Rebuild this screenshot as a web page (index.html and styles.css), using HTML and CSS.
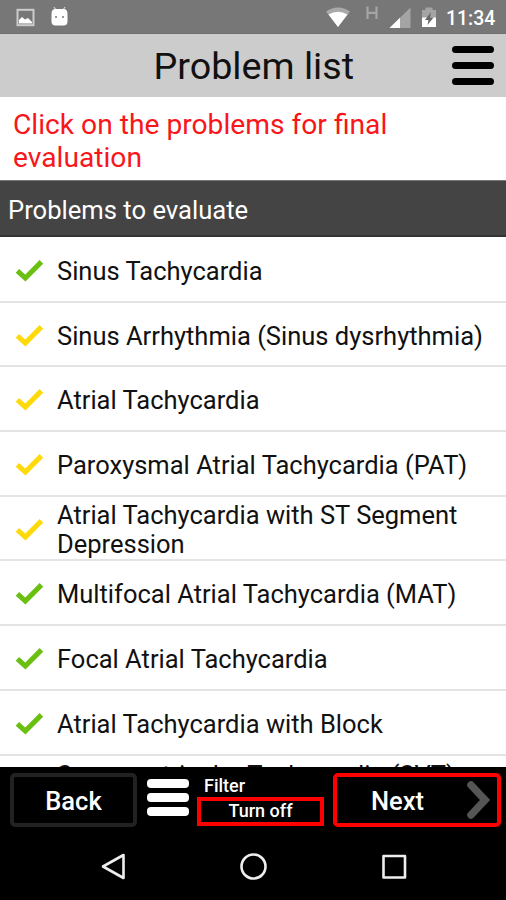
FILE: index.html
```html
<!DOCTYPE html>
<html lang="en">
<head>
<meta charset="utf-8">
<title>Problem list</title>
<link rel="stylesheet" href="styles.css">
</head>
<body>
<svg width="0" height="0" class="defs"><symbol id="check" viewBox="0 0 28 22"><path d="M2.300 11.300 10 18.300 25.500 2.700" fill="none" stroke="currentColor" stroke-width="4.900"/></symbol></svg>
<div class="screen">
  <div class="status">
    <svg class="status-left" viewBox="0 0 80 34">
      <rect x="17.5" y="9.8" width="16" height="15.4" fill="none" stroke="#ccc" stroke-width="2"/>
      <path d="M19 23.5V20l3-3 3 2.500 3-1.500 4 4v1.500z" fill="#fff"/>
      <path d="M54 7l2 3M65 7l-2 3" stroke="#ccc" stroke-width="1.300"/>
      <path d="M51.500 14q0-5 4-5h8q4 0 4 5v7.500q0 4-4 4h-8q-4 0-4-4z" fill="#fff"/>
      <circle cx="56" cy="17" r="1" fill="#777"/><circle cx="63" cy="17" r="1" fill="#777"/>
    </svg>
    <svg class="status-right" viewBox="320 0 120 34">
      <path d="M326 11.500Q338 3.500 350 11.500L338 27z" fill="#a9a9a9"/>
      <path d="M328.500 14.500Q338 9 347.500 14.500L338 27z" fill="#fff"/>
      <path d="M367.500 6.500V19M376.500 6.500V19M367.500 12.800H376.500" stroke="#a4a4a4" stroke-width="2.200"/>
      <path d="M389.500 28 410.500 7.500V28z" fill="#a4a4a4"/><path d="M389.500 28 400 17.800V28z" fill="#fff"/>
      <path d="M422 10h3.500V7.500h7V10h3.500v17h-14z" fill="#a4a4a4"/><path d="M422 17.500h14V27h-14z" fill="#fff"/>
      <path d="M431 12l-6 8h3.500l-1 5 6-7.500h-3.500z" fill="#666"/>
    </svg>
    <span class="clock">11:34</span>
  </div>
  <header class="header">
    <h1 class="title">Problem list</h1>
    <div class="menu"><i></i><i></i><i></i></div>
  </header>
  <p class="prompt">Click on the problems for final<br>evaluation</p>
  <h2 class="section">Problems to evaluate</h2>
  <ul class="list">
    <li class="row"><svg class="check green"><use href="#check"/></svg><span>Sinus Tachycardia</span></li>
    <li class="row"><svg class="check yellow"><use href="#check"/></svg><span>Sinus Arrhythmia (Sinus dysrhythmia)</span></li>
    <li class="row"><svg class="check yellow"><use href="#check"/></svg><span>Atrial Tachycardia</span></li>
    <li class="row"><svg class="check yellow"><use href="#check"/></svg><span>Paroxysmal Atrial Tachycardia (PAT)</span></li>
    <li class="row"><svg class="check yellow"><use href="#check"/></svg><span>Atrial Tachycardia with ST Segment<br>Depression</span></li>
    <li class="row"><svg class="check green"><use href="#check"/></svg><span>Multifocal Atrial Tachycardia (MAT)</span></li>
    <li class="row"><svg class="check green"><use href="#check"/></svg><span>Focal Atrial Tachycardia</span></li>
    <li class="row"><svg class="check green"><use href="#check"/></svg><span>Atrial Tachycardia with Block</span></li>
    <li class="row last"><span>Supraventricular Tachycardia (SVT)</span></li>
  </ul>
  <div class="toolbar">
    <div class="button back">Back</div>
    <div class="bars"><i></i><i></i><i></i></div>
    <div class="filter"><span class="filter-label">Filter</span><div class="toggle">Turn off</div></div>
    <div class="button next"><span>Next</span><svg class="chevron" viewBox="0 0 26 40"><path d="M6 5 20 20 6 35" fill="none" stroke="#555" stroke-width="7.500" stroke-linecap="round"/></svg></div>
  </div>
  <svg class="nav" viewBox="0 0 506 67" fill="none" stroke="#eee" stroke-width="2.600" stroke-linejoin="round">
    <path d="M103 33.500 123.500 22v23z"/><circle cx="253.500" cy="33.500" r="12"/><rect x="383.500" y="23" width="21.500" height="21.500"/>
  </svg>
</div>
</body>
</html>
```
FILE: styles.css
```css
* { box-sizing: border-box; }
body { margin: 0; font-family: Roboto, "Liberation Sans", sans-serif; color: #111; }
.defs { position: absolute; }
.screen { width: 506px; height: 900px; display: flex; flex-direction: column; overflow: hidden; background: #fff; }
.screen > * { flex-shrink: 0; }
.status { height: 34px; background: #777; display: flex; align-items: center; border-bottom: 1px solid #707070; }
.status-left { width: 80px; height: 34px; }
.status-right { width: 120px; height: 34px; margin-left: 240px; }
.clock { margin-left: 6px; padding-top: 3px; color: #fff; font-size: 19.4px; font-weight: 500; }
.header { height: 63px; background: #ccc; display: flex; align-items: center; justify-content: flex-end; padding-right: 12px; }
.title { margin: 2px 98px 0 0; font-size: 37.7px; line-height: 61px; font-weight: 400; }
.menu { width: 42px; height: 39px; display: flex; flex-direction: column; justify-content: space-between; }
.menu i { height: 7px; border-radius: 4px; background: #000; }
.prompt { height: 83px; margin: 0; padding: 11px 13px 0; font-size: 28.2px; line-height: 33px; color: #f8161b; }
.section { height: 57px; margin: 0; padding: 0 8px; background: #444; border-top: 1px solid #777; border-bottom: 2px solid #333; color: #fff; font-size: 25.6px; line-height: 58px; font-weight: 400; }
.list { height: 530px; margin: 0; padding: 1px 0 0; list-style: none; overflow: hidden; }
.row { height: 64.7px; display: flex; align-items: center; gap: 13px; padding: 4px 0 0 15px; border-bottom: 2px solid #e4e4e4; font-size: 25.5px; line-height: 29px; white-space: nowrap; }
.row.last { padding: 8px 0 0 57px; align-items: flex-start; line-height: 22px; }
.check { width: 29px; height: 23px; flex: none; margin-top: -2px; }
.green { color: #6abf10; }
.yellow { color: #ffda0a; }
.toolbar { height: 66px; background: #000; display: flex; align-items: flex-start; padding: 6px 4px 0 10px; color: #fff; }
.button { height: 54px; border: 4px solid #222; border-radius: 5px; font-size: 25.5px; line-height: 49px; font-weight: 500; }
.back { width: 127px; text-align: center; }
.bars { width: 42px; height: 37px; margin: 6px 8px 0 10px; display: flex; flex-direction: column; justify-content: space-between; }
.bars i { height: 9px; background: #fff; border-radius: 4px; }
.filter { width: 127px; margin-right: 9px; }
.filter-label { display: block; height: 24px; padding: 2px 0 0 7px; font-size: 18px; line-height: 22px; font-weight: 500; }
.toggle { height: 29px; border: 4px solid #f00; text-align: center; font-size: 18px; line-height: 20px; font-weight: 500; }
.next { width: 168px; border-color: #f00; display: flex; justify-content: space-between; padding: 0 6px 0 34px; }
.chevron { width: 26px; height: 40px; margin-top: 3px; }
.nav { width: 506px; height: 67px; background: #000; }
```
